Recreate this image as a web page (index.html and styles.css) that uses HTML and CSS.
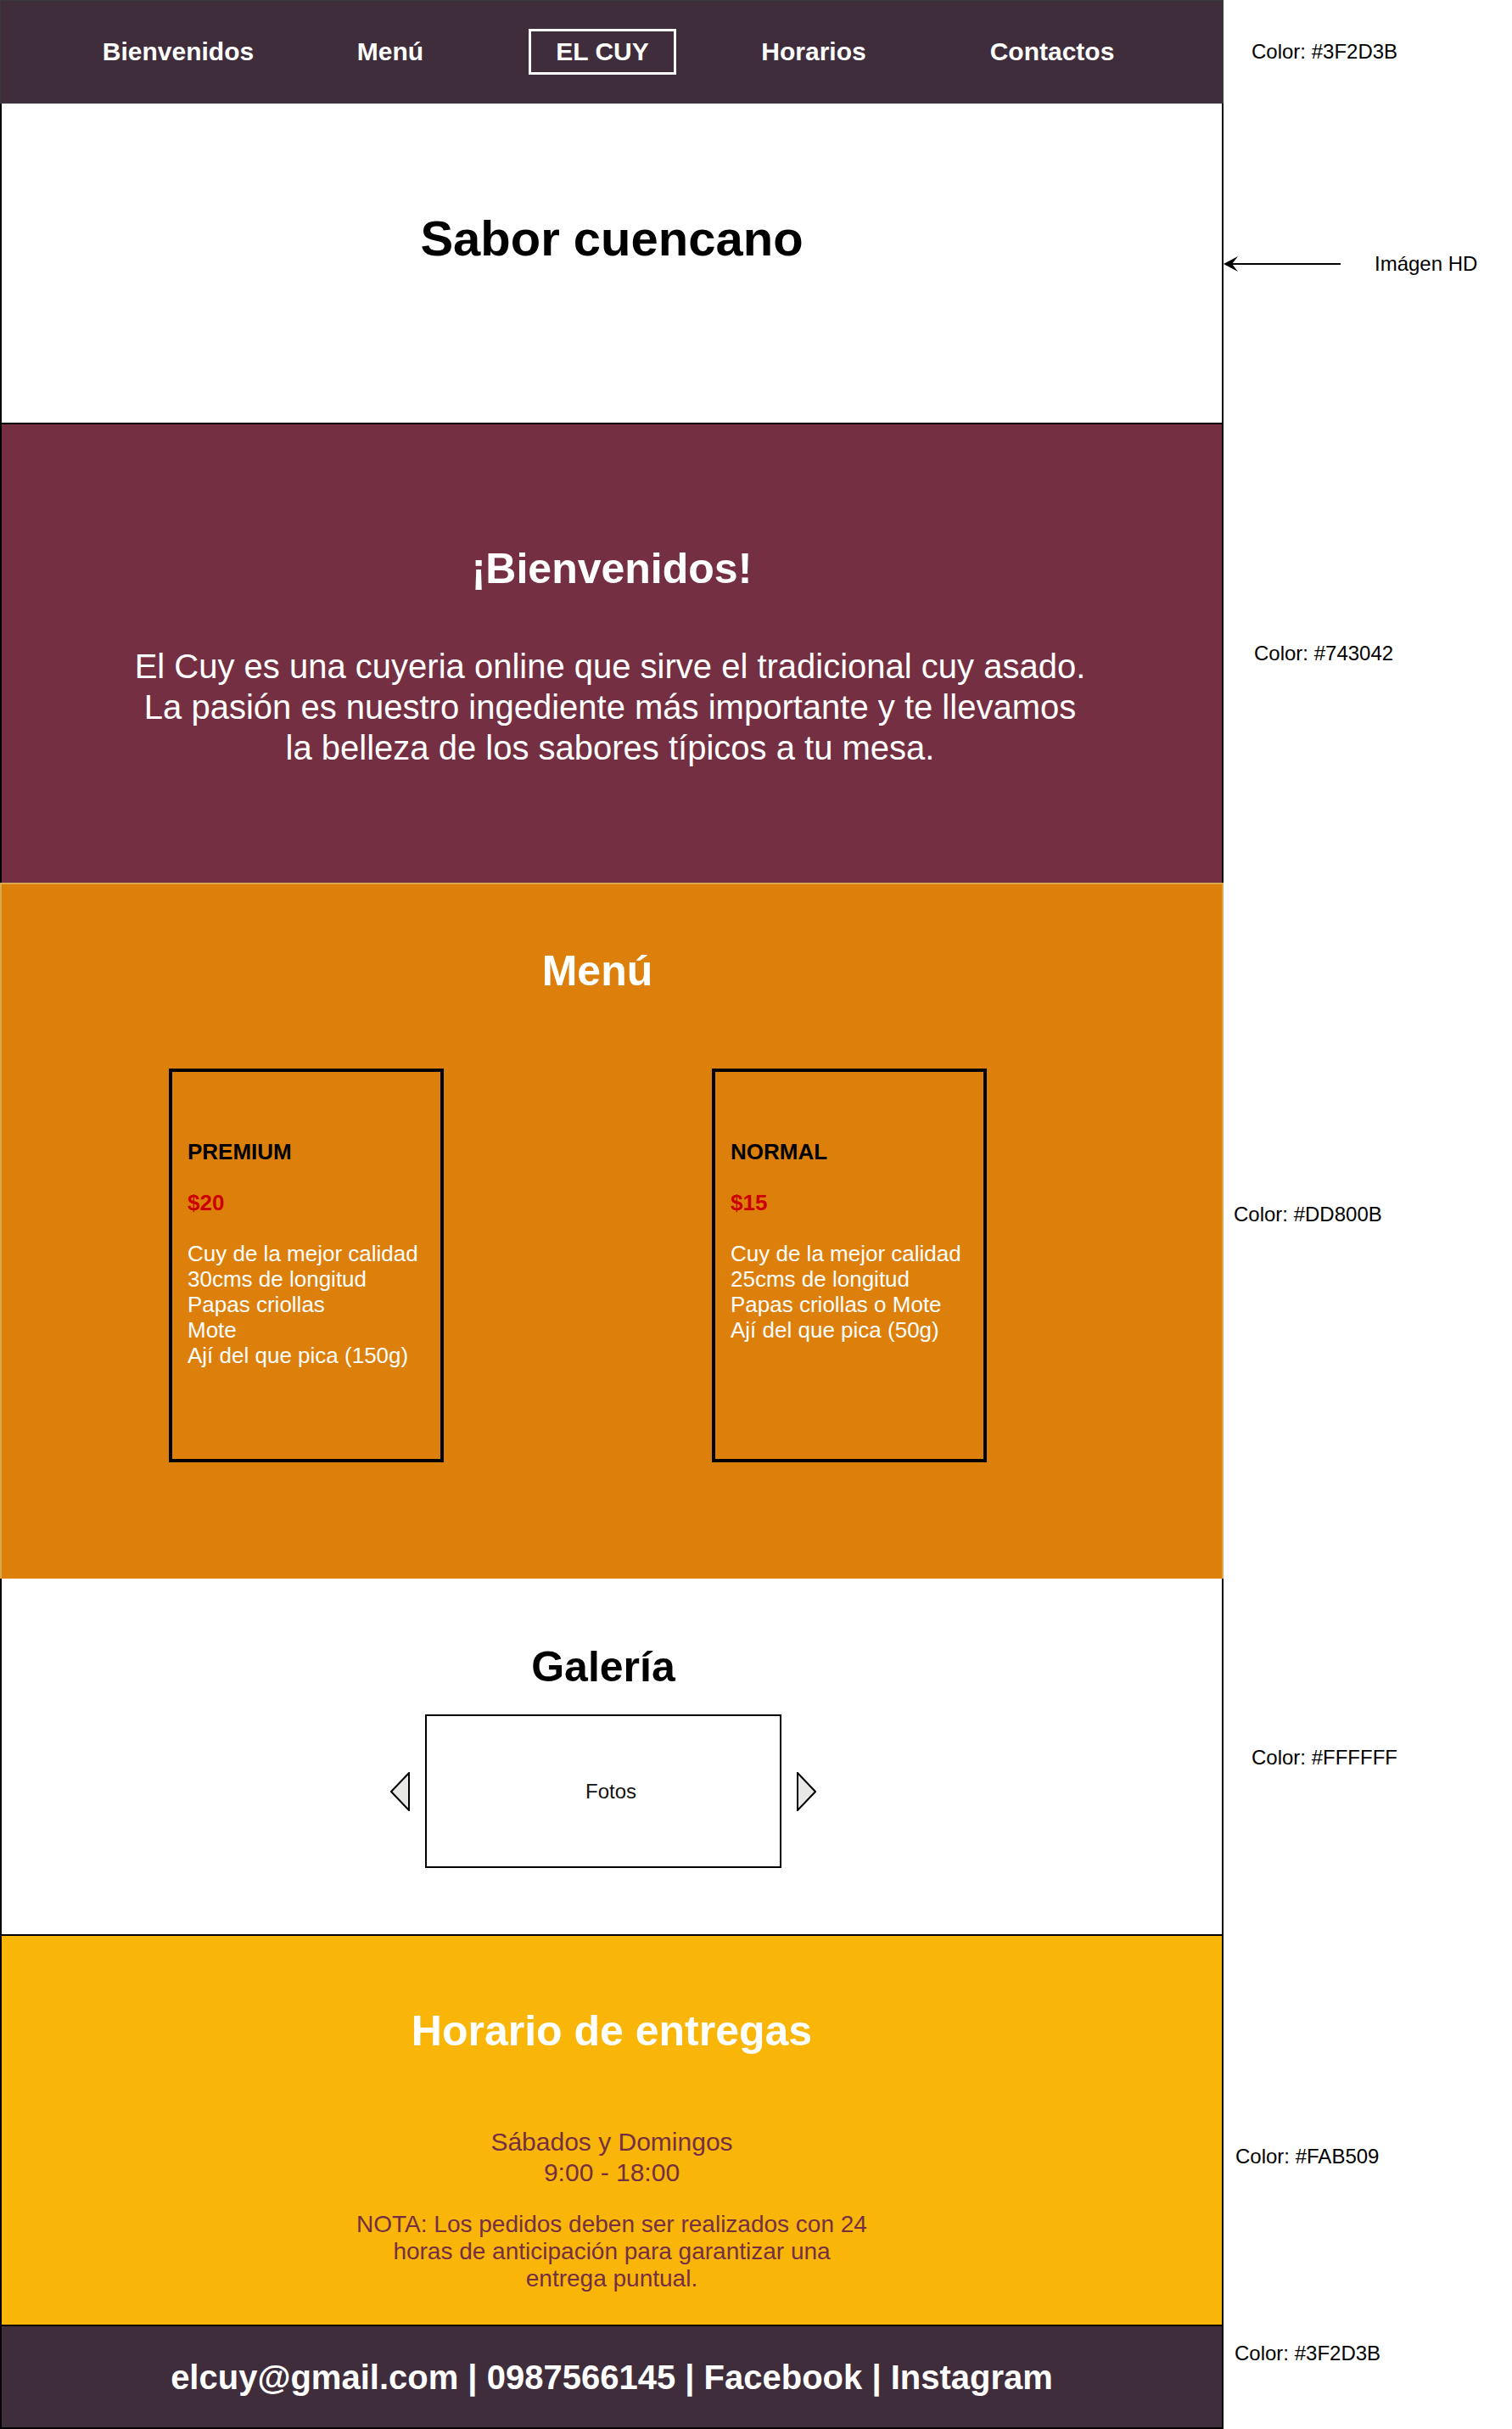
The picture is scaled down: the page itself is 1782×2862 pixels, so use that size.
FILE: index.html
```html
<!DOCTYPE html>
<html lang="es">
<head>
<meta charset="utf-8">
<title>El Cuy</title>
<link rel="stylesheet" href="styles.css">
</head>
<body>
<div class="canvas">
  <nav class="nav">
    <span class="nav-item">Bienvenidos</span>
    <span class="nav-item">Menú</span>
    <span class="nav-item"><span class="brand">EL CUY</span></span>
    <span class="nav-item">Horarios</span>
    <span class="nav-item">Contactos</span>
  </nav>
  <div class="note note--nav">Color: #3F2D3B</div>

  <header class="hero">
    <h1 class="hero-title">Sabor cuencano</h1>
  </header>
  <div class="note note--hero">
    <svg class="pointer" width="138" height="20" viewBox="0 0 138 20">
      <line x1="9" y1="10" x2="138" y2="10" stroke="#000" stroke-width="2"/>
      <polygon points="0,10 17,1 10,10 17,19" fill="#000"/>
    </svg>
    <span class="note-label">Imágen HD</span>
  </div>

  <section class="welcome">
    <h2 class="section-title">¡Bienvenidos!</h2>
    <p class="welcome-text">El Cuy es una cuyeria online que sirve el tradicional cuy asado.<br>La pasión es nuestro ingediente más importante y te llevamos<br>la belleza de los sabores típicos a tu mesa.</p>
  </section>
  <div class="note note--welcome">Color: #743042</div>

  <section class="menu">
    <h2 class="section-title section-title--menu">Menú</h2>
    <div class="cards">
      <div class="card">
        <div class="card-title">PREMIUM</div>
        <div class="card-price">$20</div>
        <div class="card-items">Cuy de la mejor calidad<br>30cms de longitud<br>Papas criollas<br>Mote<br>Ají del que pica (150g)</div>
      </div>
      <div class="card">
        <div class="card-title">NORMAL</div>
        <div class="card-price">$15</div>
        <div class="card-items">Cuy de la mejor calidad<br>25cms de longitud<br>Papas criollas o Mote<br>Ají del que pica (50g)</div>
      </div>
    </div>
  </section>
  <div class="note note--menu">Color: #DD800B</div>

  <section class="gallery">
    <h2 class="section-title section-title--dark">Galería</h2>
    <div class="carousel">
      <svg class="carousel-arrow" width="24" height="46" viewBox="0 0 24 46">
        <polygon points="22,1 1,23 22,45" fill="#e8e8e6" stroke="#000" stroke-width="2" stroke-linejoin="miter"/>
      </svg>
      <div class="photo">Fotos</div>
      <svg class="carousel-arrow" width="24" height="46" viewBox="0 0 24 46">
        <polygon points="2,1 23,23 2,45" fill="#e8e8e6" stroke="#000" stroke-width="2" stroke-linejoin="miter"/>
      </svg>
    </div>
  </section>
  <div class="note note--gallery">Color: #FFFFFF</div>

  <section class="schedule">
    <h2 class="section-title">Horario de entregas</h2>
    <p class="schedule-hours">Sábados y Domingos<br>9:00 - 18:00</p>
    <p class="schedule-note">NOTA: Los pedidos deben ser realizados con 24<br>horas de anticipación para garantizar una<br>entrega puntual.</p>
  </section>
  <div class="note note--schedule">Color: #FAB509</div>

  <footer class="footer">elcuy@gmail.com | 0987566145 | Facebook | Instagram</footer>
  <div class="note note--footer">Color: #3F2D3B</div>
</div>
</body>
</html>
```
FILE: styles.css
```css
* {
  box-sizing: border-box;
}

html, body {
  margin: 0;
  padding: 0;
  background: #ffffff;
}

body {
  font-family: "Liberation Sans", Arial, Helvetica, sans-serif;
  color: #000;
}

.canvas {
  display: grid;
  grid-template-columns: 1442px 340px;
  align-items: stretch;
}

/* ---------- NAV ---------- */
.nav {
  height: 122px;
  background: #3F2D3B;
  border: 1px solid #36393d;
  display: grid;
  grid-template-columns: 250px 250px 250px 248px 314px;
  padding-left: 84px;
  align-items: center;
}

.nav-item {
  color: #fff;
  font-weight: bold;
  font-size: 30px;
  text-align: center;
  line-height: 34px;
}

.brand {
  display: inline-block;
  width: 174px;
  height: 54px;
  border: 3px solid #fff;
  line-height: 47px;
  text-align: center;
}

/* ---------- HERO ---------- */
.hero {
  height: 378px;
  background: #fff;
  border: 2px solid #000;
  border-top: none;
  padding-top: 125px;
}

.hero-title {
  margin: 0;
  font-size: 58px;
  font-weight: bold;
  line-height: 67px;
  text-align: center;
}

/* ---------- SHARED ---------- */
.section-title {
  margin: 0;
  font-size: 50px;
  line-height: 58px;
  font-weight: bold;
  color: #fff;
  text-align: center;
}

.section-title--dark {
  color: #000;
}

.section-title--menu {
  padding-right: 34px;
}

/* ---------- WELCOME ---------- */
.welcome {
  height: 540px;
  background: #743042;
  border-left: 2px solid #000;
  border-right: 2px solid #000;
  padding-top: 141px;
}

.welcome-text {
  margin: 62px 0 0;
  padding-right: 4px;
  color: #fff;
  font-size: 40px;
  line-height: 48px;
  text-align: center;
}

/* ---------- MENU ---------- */
.menu {
  height: 820px;
  background: #DD800B;
  border: 2px solid #d9a84c;
  border-bottom: none;
  padding-top: 73px;
}

.cards {
  display: flex;
  gap: 316px;
  padding-left: 197px;
  margin-top: 86px;
}

.card {
  width: 324px;
  height: 464px;
  border: 4px solid #000;
  padding: 79px 18px 0;
  font-size: 26px;
  line-height: 30px;
}

.card-title {
  font-weight: bold;
  color: #000;
  margin-bottom: 30px;
}

.card-price {
  font-weight: bold;
  color: #CC0000;
  margin-bottom: 30px;
}

.card-items {
  color: #fff;
}

/* ---------- GALLERY ---------- */
.gallery {
  height: 421px;
  background: #fff;
  border: 2px solid #000;
  border-top: none;
  padding-top: 75px;
  padding-right: 20px;
}

.carousel {
  margin-top: 27px;
  display: flex;
  align-items: center;
  justify-content: center;
  gap: 17px;
}

.carousel-arrow {
  display: block;
}

.photo {
  width: 420px;
  height: 181px;
  border: 2px solid #000;
  display: flex;
  align-items: center;
  justify-content: center;
  padding-left: 18px;
  font-size: 24px;
  color: #111;
}

/* ---------- SCHEDULE ---------- */
.schedule {
  height: 460px;
  background: #FAB509;
  border: 2px solid #000;
  border-top: none;
  padding-top: 83px;
}

.schedule-hours {
  margin: 84px 0 0;
  font-size: 30px;
  line-height: 36px;
  color: #743042;
  text-align: center;
}

.schedule-note {
  margin: 27px 0 0;
  font-size: 28px;
  line-height: 32px;
  color: #743042;
  text-align: center;
}

/* ---------- FOOTER ---------- */
.footer {
  height: 121px;
  background: #3F2D3B;
  border: 2px solid #000;
  border-top: none;
  display: flex;
  align-items: center;
  justify-content: center;
  padding-top: 2px;
  color: #fff;
  font-size: 40px;
  font-weight: bold;
}

/* ---------- NOTES ---------- */
.note {
  align-self: center;
  font-size: 24px;
  line-height: 28px;
  color: #000;
  white-space: nowrap;
}

.note--nav { padding-left: 33px; }
.note--hero {
  display: flex;
  align-items: center;
  gap: 40px;
}
.pointer { display: block; }
.note--welcome { padding-left: 36px; }
.note--menu { padding-left: 12px; margin-bottom: 38px; }
.note--gallery { padding-left: 33px; }
.note--schedule { padding-left: 14px; margin-top: 60px; }
.note--footer { padding-left: 13px; margin-bottom: 58px; }
```
